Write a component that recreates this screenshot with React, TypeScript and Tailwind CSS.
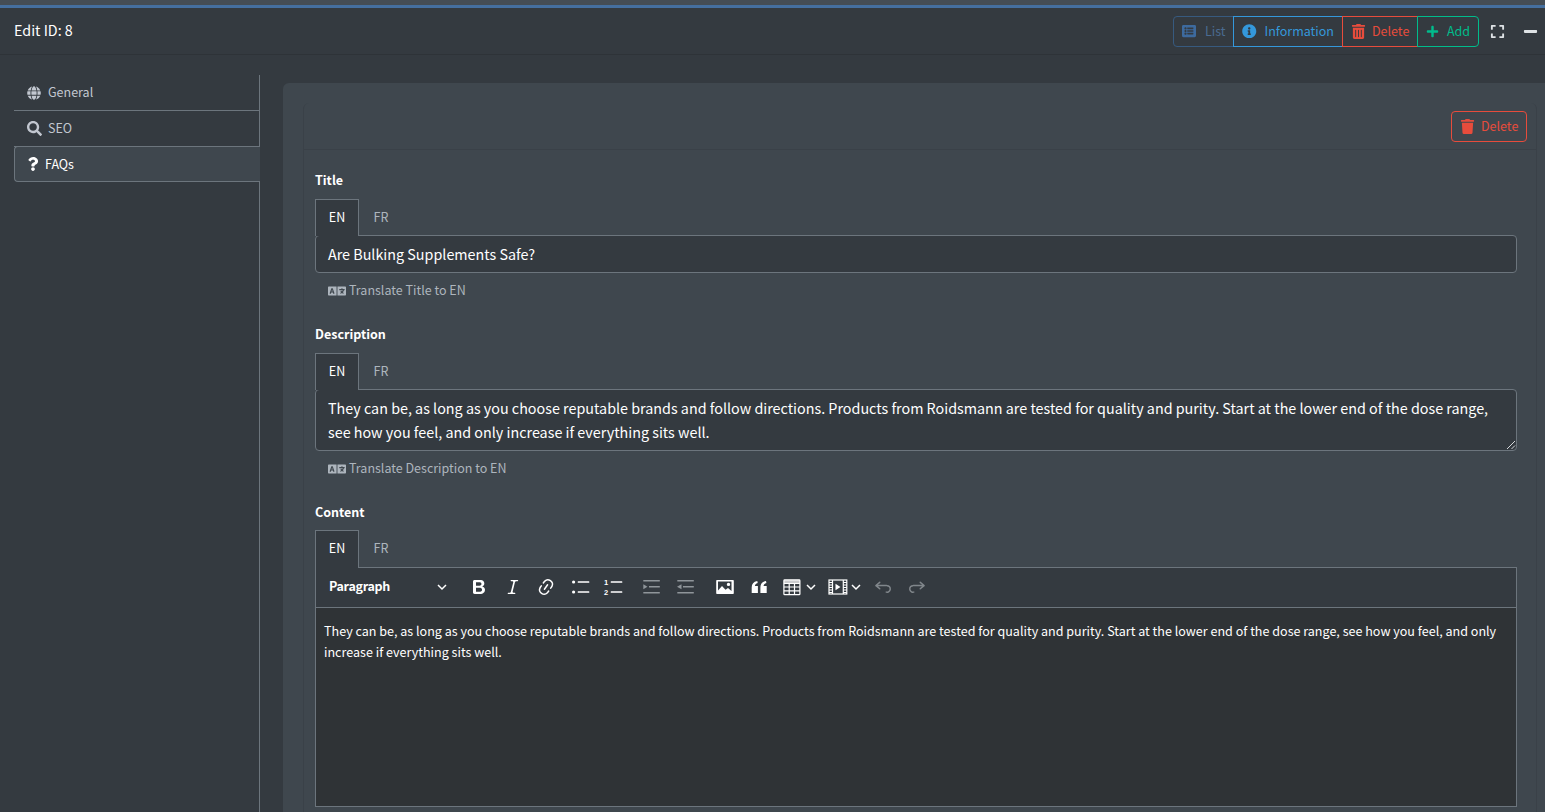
import { useState } from 'react'
import {
  FaExpand,
  FaGlobe,
  FaInfoCircle,
  FaLanguage,
  FaListAlt,
  FaMinus,
  FaPlus,
  FaQuestion,
  FaSearch,
  FaTrash,
  FaTrashAlt,
} from 'react-icons/fa'

const bold = 'M10.187 17H5.773c-.637 0-1.092-.138-1.364-.415-.273-.277-.409-.718-.409-1.323V4.738c0-.617.14-1.062.419-1.332.279-.27.73-.406 1.354-.406h4.68c.69 0 1.288.041 1.793.124.506.083.96.242 1.36.478.341.197.644.447.906.75a3.262 3.262 0 0 1 .808 2.162c0 1.401-.722 2.426-2.167 3.075C15.05 10.175 16 11.315 16 13.01a3.756 3.756 0 0 1-2.296 3.504 6.1 6.1 0 0 1-1.517.377c-.571.073-1.238.11-2 .11zm-.217-6.217H7v4.087h3.069c1.977 0 2.965-.69 2.965-2.072 0-.707-.256-1.22-.768-1.537-.512-.319-1.277-.478-2.296-.478zM7 5.13v3.619h2.606c.729 0 1.292-.067 1.69-.2a1.6 1.6 0 0 0 .91-.765c.165-.267.247-.566.247-.897 0-.707-.26-1.176-.778-1.409-.519-.232-1.31-.348-2.375-.348H7z'
const italic = 'm9.586 14.633.021.004c-.036.335.095.655.393.962.082.083.173.15.274.201h1.474a.6.6 0 1 1 0 1.2H5.304a.6.6 0 0 1 0-1.2h1.15c.474-.07.809-.182 1.005-.334.157-.122.291-.32.404-.597l2.416-9.55a1.053 1.053 0 0 0-.281-.823 1.12 1.12 0 0 0-.442-.296H8.15a.6.6 0 0 1 0-1.2h6.443a.6.6 0 1 1 0 1.2h-1.195c-.376.056-.65.155-.823.296-.215.175-.423.439-.623.79l-2.366 9.347z'
const link = 'm11.077 15 .991-1.416a.75.75 0 1 1 1.229.86l-1.148 1.64a.748.748 0 0 1-.217.206 5.251 5.251 0 0 1-8.503-5.955.741.741 0 0 1 .12-.274l1.147-1.639a.75.75 0 1 1 1.228.86L4.933 10.7l.006.003a3.75 3.75 0 0 0 6.132 4.294l.006.004zm5.494-5.335a.748.748 0 0 1-.12.274l-1.147 1.639a.75.75 0 1 1-1.228-.86l.86-1.23a3.75 3.75 0 0 0-6.144-4.301l-.86 1.229a.75.75 0 0 1-1.229-.86l1.148-1.64a.748.748 0 0 1 .217-.206 5.251 5.251 0 0 1 8.503 5.955zm-4.563-2.532a.75.75 0 0 1 .184 1.045l-3.155 4.505a.75.75 0 1 1-1.229-.86l3.155-4.506a.75.75 0 0 1 1.045-.184z'
const undo = 'm5.042 9.367 2.189 1.837a.75.75 0 0 1-.965 1.149l-3.788-3.18a.747.747 0 0 1-.21-.284.75.75 0 0 1 .17-.945L6.23 4.762a.75.75 0 1 1 .964 1.15L4.863 7.866h8.917A.75.75 0 0 1 14 7.9a4 4 0 1 1-1.477 7.718l.344-1.489a2.5 2.5 0 1 0 1.094-4.73l.008-.032H5.042z'
const redo = 'm14.958 9.367-2.189 1.837a.75.75 0 0 0 .965 1.149l3.788-3.18a.747.747 0 0 0 .21-.284.75.75 0 0 0-.17-.945L13.77 4.762a.75.75 0 1 0-.964 1.15l2.331 1.955H6.22A.75.75 0 0 0 6 7.9a4 4 0 1 0 1.477 7.718l-.344-1.489A2.5 2.5 0 1 1 6.039 9.4l-.008-.032h8.927z'

function Icon20({ d, className = '' }: { d: string, className?: string }) {
  return (
    <svg viewBox="0 0 20 20" fill="currentColor" className={`w-5 h-5 ${className}`}>
      <path d={d} />
    </svg>
  )
}

function Chevron() {
  return (
    <svg viewBox="0 0 10 10" fill="none" stroke="currentColor" strokeWidth="1.5" className="w-[10px] h-[10px]">
      <path d="M1 3l4 4 4-4" />
    </svg>
  )
}

function BulletList() {
  return (
    <svg viewBox="0 0 20 20" fill="currentColor" className="w-5 h-5">
      <circle cx="3.600" cy="5" r="1.600" />
      <circle cx="3.600" cy="15" r="1.600" />
      <rect x="7.700" y="4.300" width="11.600" height="1.400" rx=".5" />
      <rect x="7.700" y="14.300" width="11.600" height="1.400" rx=".5" />
    </svg>
  )
}

function NumberList() {
  return (
    <svg viewBox="0 0 20 20" fill="currentColor" className="w-5 h-5">
      <text x="3" y="8" textAnchor="middle" fontSize="7.500" fontWeight="700" fontFamily="Liberation Sans">1</text>
      <text x="3" y="18" textAnchor="middle" fontSize="7.500" fontWeight="700" fontFamily="Liberation Sans">2</text>
      <rect x="7.700" y="4.300" width="11.600" height="1.400" rx=".5" />
      <rect x="7.700" y="14.300" width="11.600" height="1.400" rx=".5" />
    </svg>
  )
}

function Indent({ flip }: { flip?: boolean }) {
  return (
    <svg viewBox="0 0 20 20" fill="currentColor" className="w-5 h-5 text-[#8f959a]">
      <rect x="2.300" y="3" width="16.500" height="1.500" />
      <rect x="8" y="9" width="10.800" height="1.500" />
      <rect x="2.300" y="15" width="16.500" height="1.500" />
      {flip ? <path d="M2 9.800L6.500 7.300v5z" /> : <path d="M6.500 9.800L2.300 7.300v5z" />}
    </svg>
  )
}

function ImageIcon() {
  return (
    <svg viewBox="0 0 20 20" fill="currentColor" className="w-5 h-5">
      <path fillRule="evenodd" d="M2 3h16a.8.8 0 0 1 .8.8v12.400a.8.8 0 0 1-.8.8H2a.8.8 0 0 1-.8-.8V3.800A.8.8 0 0 1 2 3zm1 1.500v9l4-4.500 3.500 3.800 2.500-1.800 3.500 3V4.500zm10.500 1.200a1.700 1.700 0 1 1 0 3.400 1.700 1.700 0 0 1 0-3.400z" />
    </svg>
  )
}

function QuoteIcon() {
  return (
    <svg viewBox="0 0 20 20" fill="currentColor" className="w-5 h-5">
      <path d="M2.700 16v-5.500C2.700 7 4.500 4.700 8.300 4l.4 1.900C6.800 6.500 6 7.500 5.900 9h3v7zm8.700 0v-5.500c0-3.500 1.800-5.800 5.600-6.500l.4 1.900c-1.900.6-2.700 1.600-2.800 3.100h3.100v7z" />
    </svg>
  )
}

function TableIcon() {
  return (
    <svg viewBox="0 0 20 20" fill="none" stroke="currentColor" strokeWidth="1.200" className="w-5 h-5">
      <rect x="1.900" y="2.900" width="16" height="14.800" rx=".8" />
      <rect x="1.900" y="2.900" width="16" height="3.400" fill="currentColor" opacity=".75" stroke="none" />
      <path d="M1.900 6.500h16M1.900 10h16M1.900 13.800h16M7.200 6.500v11M12.500 6.500v11" />
    </svg>
  )
}

function MediaIcon() {
  return (
    <svg viewBox="0 0 20 20" fill="none" stroke="currentColor" strokeWidth="1.200" className="w-5 h-5">
      <rect x="1" y="3" width="17.800" height="14" />
      <path d="M4.500 3v14M15.300 3v14" />
      <path d="M1 5.500h3.500M1 8h3.500M1 10.500h3.500M1 13h3.500M1 15.500h3.500M15.300 5.500h3.500M15.300 8h3.500M15.300 10.500h3.500M15.300 13h3.500M15.300 15.500h3.500" strokeWidth="1" />
      <path d="M7.500 6.700l5 3.300-5 3.300z" fill="currentColor" stroke="none" />
    </svg>
  )
}

function LangTabs({ tall }: { tall?: boolean }) {
  return (
    <div className={`flex ${tall ? 'h-[38px]' : 'h-[37px]'} -mb-px relative z-10`}>
      <div className={`w-[44px] flex items-center justify-center ${tall ? 'pb-[3px]' : 'pb-[2px]'} text-[12.5px] border border-[#6c757d] border-b-0 bg-[#343a40] text-white`}>EN</div>
      <div className={`w-[44px] flex items-center justify-center ${tall ? 'pb-[1px]' : ''} text-[12.5px] text-[#adb5bd]`}>FR</div>
    </div>
  )
}

function Translate({ label }: { label: string }) {
  return (
    <div className="flex items-center gap-[3px] pl-[13px] h-[21px] mt-[7px] text-[12.5px] text-[#adb5bd]">
      <FaLanguage className="w-[18px] h-[18px]" />
      <span>{label}</span>
    </div>
  )
}

const groupBtn = 'h-[31px] flex items-center border text-[12.5px]'

export default function App() {
  const [tab] = useState('FAQs')
  const nav = [
    { name: 'General', icon: <FaGlobe className="w-[14px] h-[14px]" />, gap: 'gap-[7px]' },
    { name: 'SEO', icon: <FaSearch className="w-[15px] h-[15px]" />, gap: 'gap-[6px]' },
    { name: 'FAQs', icon: <FaQuestion className="w-[14px] h-[14px]" />, gap: 'gap-[5px]' },
  ]

  return (
    <div className="h-screen overflow-hidden bg-[#343a40] text-white font-['Noto_Sans_CJK_SC','Noto_Sans',sans-serif]">
      <div className="h-[5px] bg-[#454d55]" />
      <div className="h-[3px] bg-[#456f9f]" />
      <header className="h-[47px] flex items-center justify-between border-b border-[#2e3338] pl-[14px] pr-[7px]">
        <h1 className="text-[14.3px] pb-[3px]">Edit ID: 8</h1>
        <div className="flex items-center">
          <div className="flex">
            <div className={`${groupBtn} w-[61px] pl-2 gap-[9px] rounded-l border-[#375a7f] text-[#4a6b91]`}>
              <FaListAlt className="w-[14px] h-[14px] text-[#3d6a9e]" />
              <span>List</span>
            </div>
            <div className={`${groupBtn} w-[110px] pl-2 gap-[8px] border-[#3498db] -ml-px text-[#3498db]`}>
              <FaInfoCircle className="w-[14.500px] h-[14.500px]" />
              <span>Information</span>
            </div>
            <div className={`${groupBtn} w-[76px] pl-2 gap-[6px] border-[#e74c3c] -ml-px text-[#e74c3c]`}>
              <FaTrashAlt className="w-[15px] h-[15px]" />
              <span>Delete</span>
            </div>
            <div className={`${groupBtn} w-[62px] pl-2 gap-[8px] rounded-r border-[#00bc8c] -ml-px text-[#00bc8c]`}>
              <FaPlus className="w-[13px] h-[13px]" />
              <span>Add</span>
            </div>
          </div>
          <FaExpand className="w-[15px] h-[15px] ml-[11px] text-[#dfe3e6]" />
          <FaMinus className="w-[15px] h-[15px] ml-[18px] text-[#dfe3e6]" />
        </div>
      </header>

      <div className="flex pl-[14px]">
        <nav className="w-[246px] shrink-0 mt-[20px] h-[800px] border-r border-[#6c757d]">
          {nav.map(item => (
            <div
              key={item.name}
              className={
                item.name === tab
                  ? `h-[36px] -mt-px flex items-center ${item.gap} pl-[11px] -mr-px text-[12.5px] text-white bg-[#3f474e] border border-[#6c757d] border-r-0 rounded-l`
                  : `h-[36px] flex items-center ${item.gap} pl-[13px] text-[12.5px] text-[#c2c7d0] border-b border-[#6c757d]`
              }
            >
              {item.icon}
              <span>{item.name}</span>
            </div>
          ))}
        </nav>

        <main className="flex-1 mt-[28px] ml-[23px] p-[20px] pr-[8px] h-[800px] bg-[#3f474e] rounded-tl-md">
          <section className="rounded-t-md border-x border-[#3a4148] h-full">
            <div className="h-[47px] flex items-center justify-end pr-[9px] border-b border-[#3a4148]">
              <div className="h-[31px] w-[76px] flex items-center gap-[6px] pl-2 border border-[#e74c3c] rounded text-[12.5px] text-[#e74c3c]">
                <FaTrash className="w-[15px] h-[15px]" />
                <span>Delete</span>
              </div>
            </div>

            <div className="pl-[11px] pr-[19px] pt-[21px]">
              <label className="block text-[12.5px] font-bold h-[21px]">Title</label>
              <div className="mt-[7px]">
                <LangTabs />
                <div className="h-[38px] flex items-center px-3 bg-[#343a40] border border-[#6c757d] rounded text-[14.34px]">
                  Are Bulking Supplements Safe?
                </div>
                <Translate label="Translate Title to EN" />
              </div>

              <label className="block text-[12.5px] font-bold h-[21px] mt-[24px]">Description</label>
              <div className="mt-[7px]">
                <LangTabs />
                <div className="relative h-[62px] px-3 py-[6px] bg-[#343a40] border border-[#6c757d] rounded text-[14.34px] leading-6">
                  They can be, as long as you choose reputable brands and follow directions. Products from Roidsmann are tested for quality and purity. Start at the lower end of the dose range, see how you feel, and only increase if everything sits well.
                  <svg viewBox="0 0 10 10" className="absolute right-0 bottom-0 w-[10px] h-[10px]" stroke="#d5d8db" strokeWidth="1">
                    <path d="M1 9l8-8M5.500 9l3.500-3.500" />
                  </svg>
                </div>
                <Translate label="Translate Description to EN" />
              </div>

              <label className="block text-[12.5px] font-bold h-[21px] mt-[24px]">Content</label>
              <div className="mt-[6px]">
                <LangTabs tall />
                <div className="h-[41px] flex items-center pl-[13px] pb-[2px] bg-[#343a40] border border-[#6c757d] text-white">
                  <div className="w-[120px] flex items-center justify-between pr-[2px] text-[12.5px] font-bold tracking-[-0.3px]">
                    <span>Paragraph</span>
                    <Chevron />
                  </div>
                  <div className="flex items-center gap-[13.500px] ml-[20px]">
                    <Icon20 d={bold} />
                    <Icon20 d={italic} />
                    <Icon20 d={link} />
                    <BulletList />
                    <NumberList />
                    <div className="ml-[4.500px]">
                      <Indent />
                    </div>
                    <Indent flip />
                  </div>
                  <div className="flex items-center gap-[14px] ml-[20px]">
                    <ImageIcon />
                    <QuoteIcon />
                    <div className="flex items-center gap-[4px] -ml-[1px]">
                      <TableIcon />
                      <Chevron />
                    </div>
                    <div className="flex items-center gap-[3px] -ml-[2px]">
                      <MediaIcon />
                      <Chevron />
                    </div>
                    <Icon20 d={undo} className="text-[#80868b] -ml-[2px]" />
                    <Icon20 d={redo} className="text-[#80868b]" />
                  </div>
                </div>
                <div className="h-[200px] -mt-px px-2 pt-[12px] bg-[#2f3336] border border-[#6c757d] text-[12.55px] leading-[21px]">
                  They can be, as long as you choose reputable brands and follow directions. Products from Roidsmann are tested for quality and purity. Start at the lower end of the dose range, see how you feel, and only increase if everything sits well.
                </div>
              </div>
            </div>
          </section>
        </main>
      </div>
    </div>
  )
}
